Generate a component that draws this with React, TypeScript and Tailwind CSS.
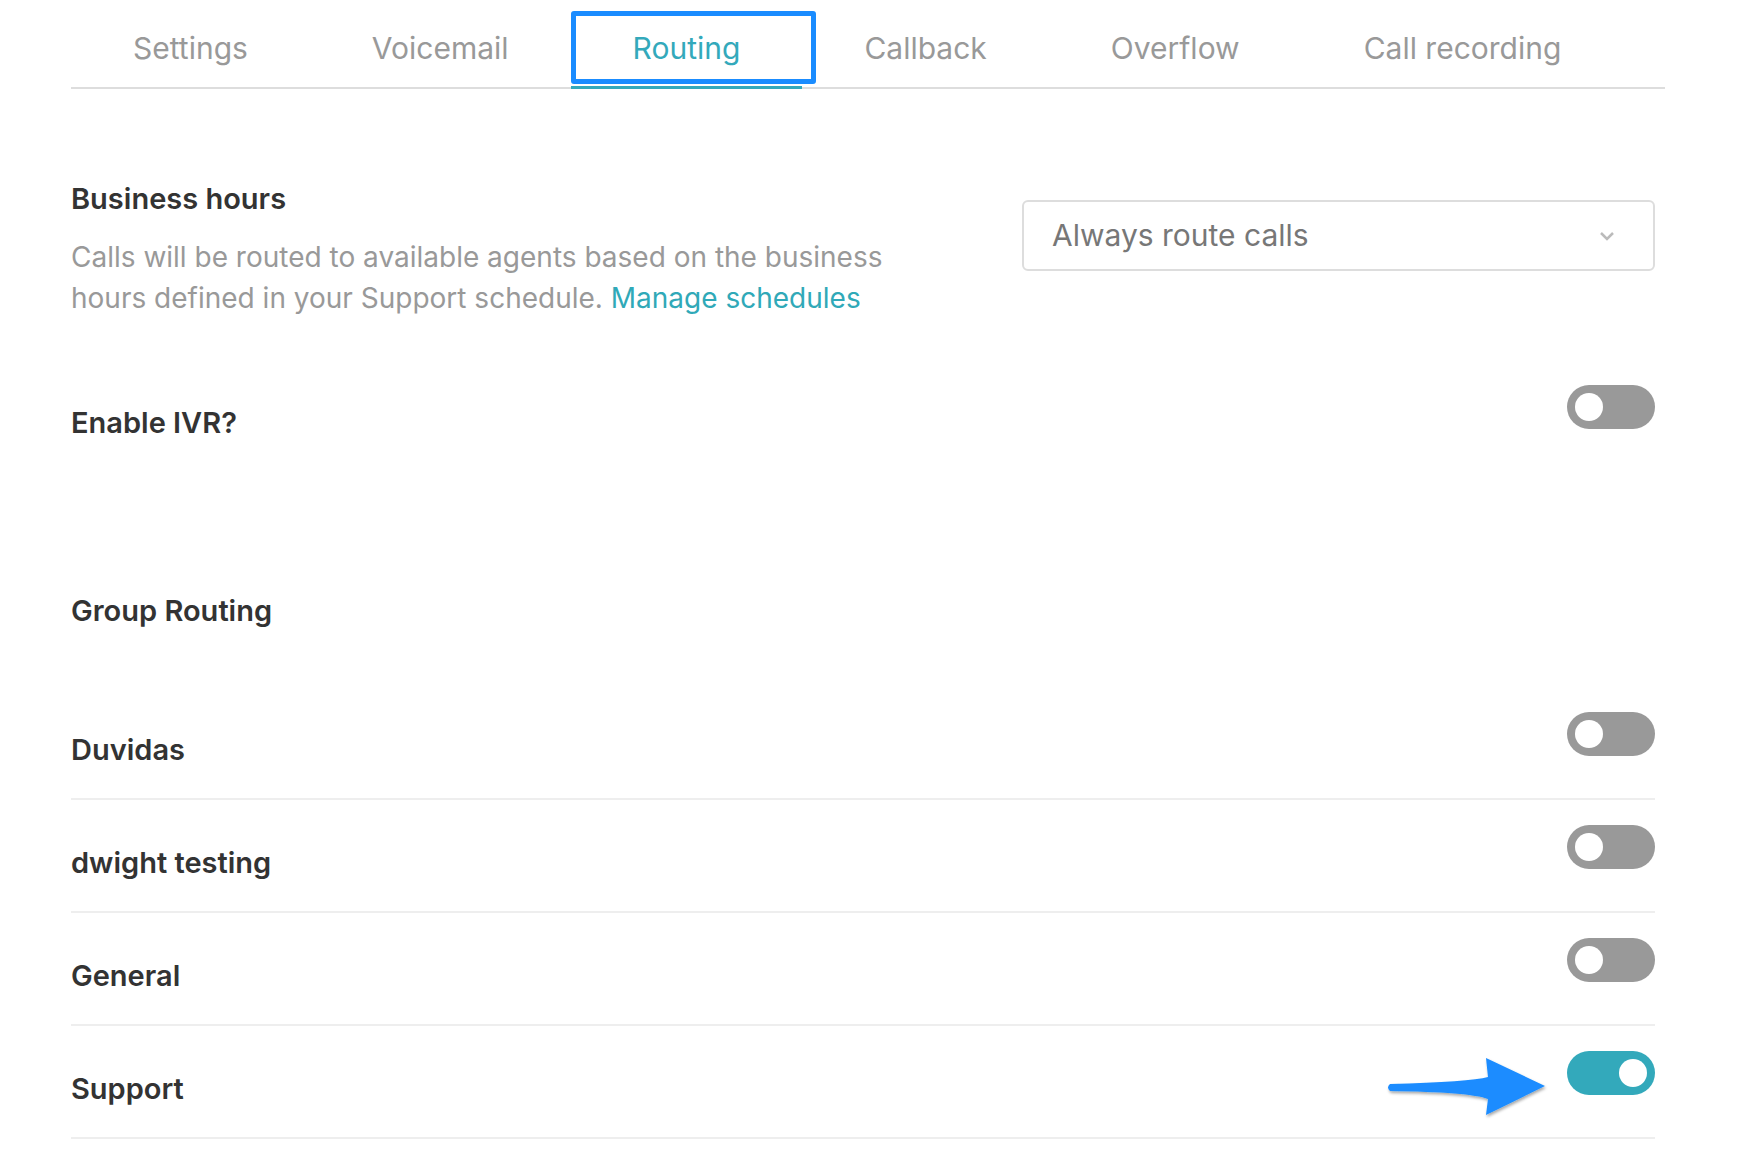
import { useState } from 'react';

const tabs = ['Settings', 'Voicemail', 'Routing', 'Callback', 'Overflow', 'Call recording'];

function Toggle({ on, onChange }: { on: boolean; onChange: () => void }) {
  return (
    <button
      onClick={onChange}
      className={`relative flex h-[44px] w-[88px] shrink-0 items-center rounded-full px-[8px] ${
        on ? 'justify-end bg-[#33a9bb]' : 'justify-start bg-[#999999]'
      }`}
    >
      <span className="block h-[28px] w-[28px] rounded-full bg-white" />
    </button>
  );
}

function Arrow() {
  return (
    <svg
      className="absolute -left-[187px] top-[-2px]"
      width="172"
      height="72"
      viewBox="0 0 172 72"
    >
      <defs>
        <filter id="sh" x="-10%" y="-20%" width="130%" height="150%">
          <feDropShadow dx="1" dy="2" stdDeviation="1.5" floodColor="#000" floodOpacity="0.35" />
        </filter>
      </defs>
      <path
        d="M10 35 Q 90 33 108 28 L 106 9 L 165 37 L 106 66 L 108 50 Q 90 43 10 42 Q 6 38.5 10 35 Z"
        fill="#1a8cff"
        filter="url(#sh)"
      />
    </svg>
  );
}

export default function App() {
  const [groups, setGroups] = useState([
    { name: 'Duvidas', on: false },
    { name: 'dwight testing', on: false },
    { name: 'General', on: false },
    { name: 'Support', on: true },
  ]);
  const [ivr, setIvr] = useState(false);

  return (
    <div className="min-h-screen bg-white pl-[71px] pt-[11px] font-['Inter',sans-serif]">
      <div className="flex w-[1594px] border-b-2 border-[#dddddd]">
        {tabs.map((t) => (
          <div
            key={t}
            className={`relative -mb-[2px] flex h-[78px] items-center px-[62px] text-[30px] ${
              t === 'Routing' ? 'border-b-[3px] border-[#33a9bb] text-[#33a9bb]' : 'border-b-[3px] border-transparent text-[#999999]'
            }`}
          >
            {t}
            {t === 'Routing' && (
              <span className="absolute -right-[14px] bottom-[2px] left-0 top-0 rounded-[3px] border-[5px] border-[#1a8cff]" />
            )}
          </div>
        ))}
      </div>

      <div className="w-[1584px]">
        <div className="mt-[92px] flex items-start justify-between">
          <div className="w-[900px]">
            <div className="text-[29px] font-semibold leading-[36px] text-[#333333]">Business hours</div>
            <p className="mt-[20px] text-[28px] leading-[41px] text-[#999999]">
              Calls will be routed to available agents based on the business
              <br />
              hours defined in your Support schedule. <a className="text-[#30a9b8]">Manage schedules</a>
            </p>
          </div>
          <div className="mt-[19px] flex h-[71px] w-[633px] items-center justify-between rounded-[6px] border-2 border-[#dddddd] pl-[28px] pr-[38px] text-[30px] text-[#777777]">
            <span>Always route calls</span>
            <svg width="16" height="10" viewBox="0 0 16 10">
              <path d="M2 2 L8 8 L14 2" fill="none" stroke="#bbbbbb" strokeWidth="2.5" />
            </svg>
          </div>
        </div>

        <div className="mt-[66px] flex items-start justify-between">
          <div className="pt-[20px] text-[29px] font-semibold leading-[36px] text-[#333333]">Enable IVR?</div>
          <Toggle on={ivr} onChange={() => setIvr(!ivr)} />
        </div>

        <div className="mt-[152px] text-[29px] font-semibold leading-[36px] text-[#333333]">Group Routing</div>

        <div className="mt-[58px]">
          {groups.map((g, i) => (
            <div
              key={g.name}
              className="flex h-[113px] items-start justify-between border-b-2 border-[#eeeeee] pt-[25px]"
            >
              <div className="pt-[20px] text-[29px] font-semibold leading-[36px] text-[#333333]">{g.name}</div>
              <div className="relative">
                {g.name === 'Support' && <Arrow />}
                <Toggle
                  on={g.on}
                  onChange={() =>
                    setGroups(groups.map((x, j) => (j === i ? { ...x, on: !x.on } : x)))
                  }
                />
              </div>
            </div>
          ))}
        </div>
      </div>
    </div>
  );
}
